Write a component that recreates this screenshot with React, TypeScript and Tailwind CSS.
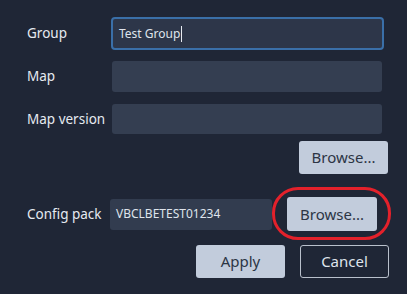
import React from 'react';

const font = { fontFamily: '"Noto Sans", "Open Sans", sans-serif' };

function Label({ children }: { children: React.ReactNode }) {
  return (
    <div className="w-[84px] shrink-0 whitespace-nowrap text-[13.5px] text-[#e6eaf1]">{children}</div>
  );
}

function Button({ children, className = '' }: { children: React.ReactNode; className?: string }) {
  return (
    <button
      className={`flex h-[33px] w-[89px] items-center justify-center rounded-[3px] bg-[#c2ccdc] text-[15px] text-[#2c3545] ${className}`}
    >
      {children}
    </button>
  );
}

export default function App() {
  return (
    <div className="h-[294px] w-[407px] overflow-hidden bg-[#1f2636] pt-[17px]" style={font}>
      {/* Group */}
      <div className="flex items-center pl-[27px]">
        <Label>Group</Label>
        <div className="flex h-[33px] w-[273px] items-center rounded-[4px] border-2 border-[#3a6fa8] bg-[#2d3649] pl-[6px] text-[12px] text-[#dfe4ec]">
          Test Group
          <span className="ml-[1px] h-[16px] w-px bg-[#e6eaf1]" />
        </div>
      </div>

      {/* Map */}
      <div className="mt-[11px] flex items-center pl-[27px]">
        <Label>Map</Label>
        <div className="ml-[1px] h-[31px] w-[270px] rounded-[3px] bg-[#343e51]" />
      </div>

      {/* Map version */}
      <div className="mt-[12px] flex items-center pl-[27px]">
        <Label>Map version</Label>
        <div className="ml-[1px] h-[30px] w-[270px] rounded-[3px] bg-[#343e51]" />
      </div>

      <div className="mt-[7px] flex">
        <Button className="ml-[299px]">Browse...</Button>
      </div>

      {/* Config pack */}
      <div className="mt-[23px] flex items-center pl-[27px]">
        <div className="w-[83px] shrink-0 whitespace-nowrap text-[13.5px] text-[#e6eaf1]">Config pack</div>
        <div className="flex h-[31px] w-[162px] items-center rounded-[3px] bg-[#323c4f] pl-[6px] text-[12px] text-[#dfe4ec]">
          VBCLBETEST01234
        </div>
        <div className="relative ml-[15px]">
          <Button className="h-[34px] w-[90px]">Browse...</Button>
          <div className="pointer-events-none absolute left-[-15px] top-[-10px] h-[53px] w-[119px] rounded-[26px] border-[3px] border-[#e3212b]" />
        </div>
      </div>

      <div className="mt-[14px] flex">
        <Button className="ml-[196px] w-[88px]">Apply</Button>
        <button className="ml-[15px] flex h-[33px] w-[89px] items-center justify-center rounded-[3px] border-[1.5px] border-[#b9c0cc] text-[15px] text-[#dfe4ec]">
          Cancel
        </button>
      </div>
    </div>
  );
}
